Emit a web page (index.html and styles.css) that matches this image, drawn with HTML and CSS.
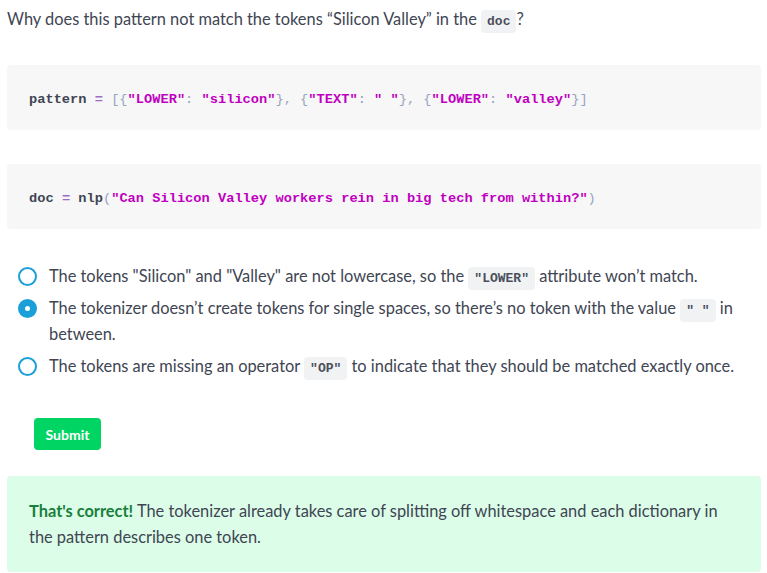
FILE: index.html
```html
<!DOCTYPE html>
<html lang="en">
<head>
<meta charset="utf-8">
<link rel="stylesheet" href="styles.css">
</head>
<body>
<div class="page">
  <p class="question">Why does this pattern not match the tokens “Silicon Valley” in the <code class="inline">doc</code>?</p>

  <pre class="code"><span class="v">pattern</span> <span class="op">=</span> <span class="p">[{</span><span class="s">"LOWER"</span><span class="p">:</span> <span class="s">"silicon"</span><span class="p">}, {</span><span class="s">"TEXT"</span><span class="p">:</span> <span class="s">" "</span><span class="p">}, {</span><span class="s">"LOWER"</span><span class="p">:</span> <span class="s">"valley"</span><span class="p">}]</span></pre>

  <pre class="code"><span class="v">doc</span> <span class="op">=</span> <span class="v">nlp</span><span class="p">(</span><span class="s">"Can Silicon Valley workers rein in big tech from within?"</span><span class="p">)</span></pre>

  <ul class="options">
    <li class="option">
      <span class="radio"></span>
      <span class="label">The tokens "Silicon" and "Valley" are not lowercase, so the <code class="inline">"LOWER"</code> attribute won’t match.</span>
    </li>
    <li class="option">
      <span class="radio checked"></span>
      <span class="label">The tokenizer doesn’t create tokens for single spaces, so there’s no token with the value <code class="inline">" "</code> in between.</span>
    </li>
    <li class="option">
      <span class="radio"></span>
      <span class="label">The tokens are missing an operator <code class="inline">"OP"</code> to indicate that they should be matched exactly once.</span>
    </li>
  </ul>

  <button class="submit">Submit</button>

  <div class="feedback">
    <strong>That's correct!</strong> The tokenizer already takes care of splitting off whitespace and each dictionary in the pattern describes one token.
  </div>
</div>
</body>
</html>
```

FILE: styles.css
```css
html, body {
  margin: 0;
  padding: 0;
  background: #ffffff;
}

body {
  font-family: Lato, "Open Sans", sans-serif;
  color: #404553;
  font-size: 16.4px;
  line-height: 26px;
}

.page {
  padding: 6px 6px 0 7px;
}

.question {
  margin: 0;
}

.inline {
  font-family: "Liberation Mono", monospace;
  font-weight: bold;
  font-size: 13px;
  line-height: 13px;
  background: #f1f2f3;
  border-radius: 4px;
  padding: 4px 6px;
  color: #4a4f5c;
}

.code {
  margin: 33px 0 0 0;
  background: #f7f7f7;
  border-radius: 4px;
  padding: 26px 22px 22px 22px;
  font-family: "Liberation Mono", monospace;
  font-weight: bold;
  font-size: 13.7px;
  line-height: 17px;
  color: #404553;
  white-space: pre;
}

.code + .code {
  margin-top: 34px;
}

.code .v { color: #404553; }
.code .op { color: #9c6bc4; }
.code .p { color: #98a4c0; font-weight: normal; }
.code .s { color: #c000c0; }

.options {
  list-style: none;
  margin: 34px 0 0 0;
  padding: 0;
}

.option {
  display: flex;
  align-items: flex-start;
  gap: 12px;
  margin-bottom: 6px;
  padding-left: 11px;
}

.radio {
  flex: none;
  width: 19px;
  height: 19px;
  box-sizing: border-box;
  border: 2px solid #1a9fd9;
  border-radius: 50%;
  margin-top: 4px;
  display: flex;
  align-items: center;
  justify-content: center;
}

.radio.checked {
  background: #1a9fd9;
}

.radio.checked::after {
  content: "";
  width: 5px;
  height: 5px;
  border-radius: 50%;
  background: #ffffff;
}

.submit {
  display: block;
  margin: 39px 0 0 27px;
  width: 67px;
  height: 32px;
  border: none;
  border-radius: 4px;
  background: #00d463;
  color: #ffffff;
  font-family: Lato, sans-serif;
  font-weight: bold;
  font-size: 14px;
  padding: 0;
}

.feedback {
  margin-top: 26px;
  background: #dcfde8;
  border-radius: 4px;
  padding: 22px 22px;
  color: #404553;
}

.feedback strong {
  color: #1a7f3c;
}
```
